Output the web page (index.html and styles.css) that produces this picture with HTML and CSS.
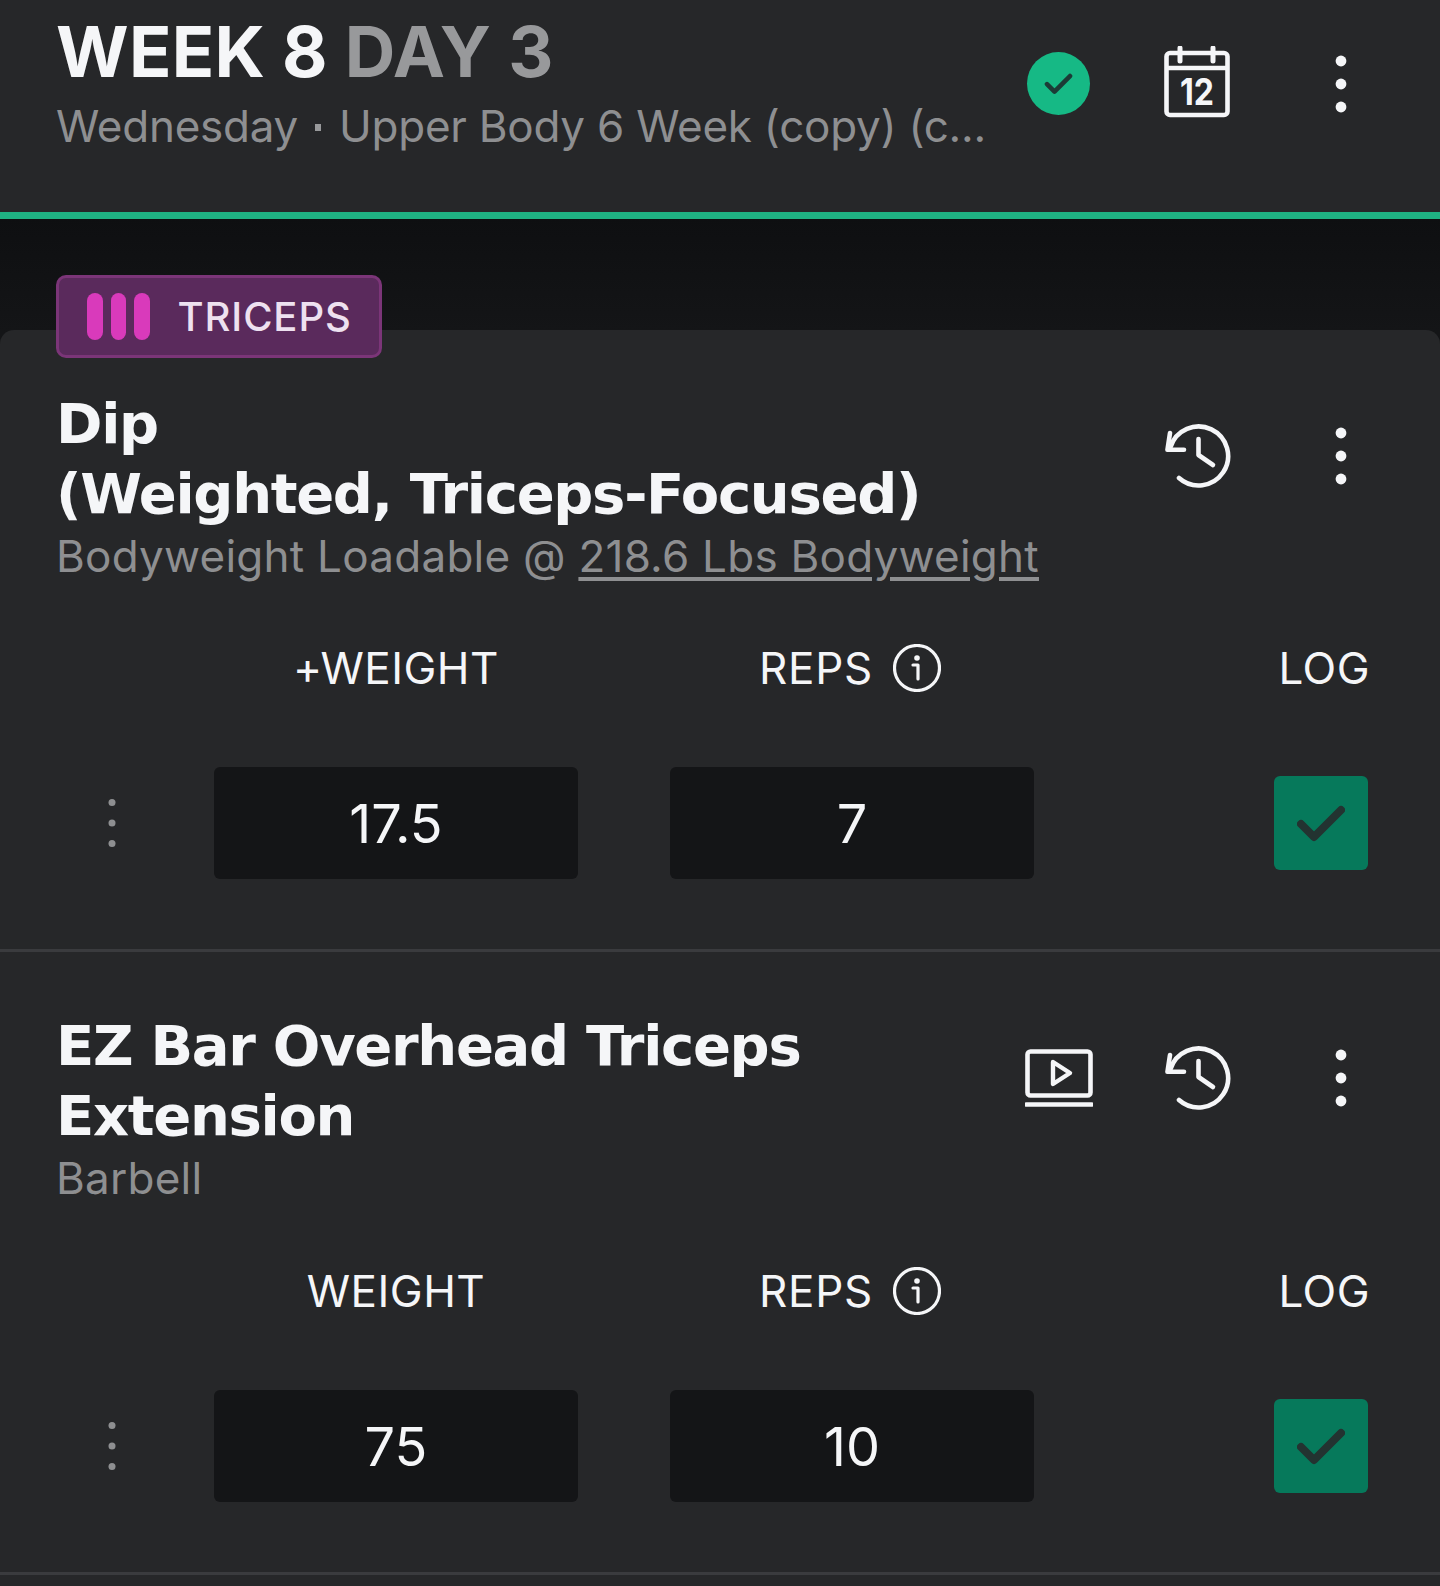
FILE: index.html
```html
<!DOCTYPE html>
<html lang="en">
<head>
    <meta charset="UTF-8">
    <title>Week 8 Day 3</title>
    <link rel="stylesheet" href="styles.css">
</head>
<body>
    <svg class="defs" width="0" height="0">
        <symbol id="i-history" viewBox="0 0 66 66">
            <path d="M5.500 23 A29.500 29.500 0 1 1 14 54" fill="none" stroke="currentColor" stroke-width="4.600" stroke-linecap="round"/>
            <path d="M5 9 L2.500 25.700 L19 25.700" fill="none" stroke="currentColor" stroke-width="4.600" stroke-linecap="round" stroke-linejoin="round"/>
            <path d="M33.500 15 V31 L48 41" fill="none" stroke="currentColor" stroke-width="4.600" stroke-linecap="round" stroke-linejoin="round"/>
        </symbol>
        <symbol id="i-kebab" viewBox="0 0 12 58">
            <circle cx="6" cy="6" r="5.400" fill="currentColor"/>
            <circle cx="6" cy="29" r="5.400" fill="currentColor"/>
            <circle cx="6" cy="52" r="5.400" fill="currentColor"/>
        </symbol>
        <symbol id="i-dots" viewBox="0 0 12 58">
            <circle cx="6" cy="8.500" r="3.500" fill="currentColor"/>
            <circle cx="6" cy="29" r="3.500" fill="currentColor"/>
            <circle cx="6" cy="49.500" r="3.500" fill="currentColor"/>
        </symbol>
        <symbol id="i-info" viewBox="0 0 48 48">
            <circle cx="24" cy="24" r="22.500" fill="none" stroke="currentColor" stroke-width="3.200"/>
            <circle cx="24" cy="14" r="2.800" fill="currentColor"/>
            <path d="M20 21 H25 V35" fill="none" stroke="currentColor" stroke-width="3.200" stroke-linecap="round" stroke-linejoin="round"/>
        </symbol>
        <symbol id="i-check" viewBox="0 0 48 40">
            <path d="M4 21 L17 34 L44 7" fill="none" stroke="currentColor" stroke-width="8" stroke-linecap="round" stroke-linejoin="round"/>
        </symbol>
    </svg>

    <header class="top">
        <div class="top-text">
            <h1 class="top-title">WEEK 8 <span class="muted">DAY 3</span></h1>
            <p class="top-sub">Wednesday<span class="dot"></span>Upper Body 6 Week (copy) (c...</p>
        </div>
        <div class="top-done">
            <svg class="done-check"><use href="#i-check"/></svg>
        </div>
        <svg class="calendar" viewBox="0 0 66 72">
            <rect x="2.500" y="7" width="61" height="62" rx="3.500" fill="none" stroke="currentColor" stroke-width="4.600"/>
            <path d="M2.500 22 H63.500" stroke="currentColor" stroke-width="4.600"/>
            <path d="M16 2 V15 M49 2 V15" stroke="currentColor" stroke-width="5" stroke-linecap="round"/>
            <text x="16" y="59" class="calendar-num" textLength="34" lengthAdjust="spacingAndGlyphs">12</text>
        </svg>
        <svg class="kebab kebab-top"><use href="#i-kebab"/></svg>
    </header>

    <main class="group">
        <div class="badge">
            <span class="badge-bars"><i></i><i></i><i></i></span>
            <span>TRICEPS</span>
        </div>

        <div class="card">
            <section class="exercise">
                <div class="ex-head">
                    <div class="ex-text">
                        <h2 class="ex-name">Dip<br>(Weighted, Triceps-Focused)</h2>
                        <p class="ex-type">Bodyweight Loadable @ <u>218.6 Lbs Bodyweight</u></p>
                    </div>
                    <div class="ex-actions">
                        <svg class="history"><use href="#i-history"/></svg>
                        <svg class="kebab"><use href="#i-kebab"/></svg>
                    </div>
                </div>
                <div class="sets">
                    <div></div>
                    <div class="label">+WEIGHT</div>
                    <div class="label label-reps">REPS <svg class="info"><use href="#i-info"/></svg></div>
                    <div class="label label-log">LOG</div>

                    <svg class="handle"><use href="#i-dots"/></svg>
                    <div class="value">17.5</div>
                    <div class="value">7</div>
                    <div class="log"><svg class="log-check"><use href="#i-check"/></svg></div>
                </div>
            </section>

            <section class="exercise">
                <div class="ex-head">
                    <div class="ex-text">
                        <h2 class="ex-name">EZ Bar Overhead Triceps<br>Extension</h2>
                        <p class="ex-type">Barbell</p>
                    </div>
                    <div class="ex-actions">
                        <svg class="video" viewBox="0 0 68 58">
                            <rect x="2.500" y="2.500" width="63" height="44" rx="3" fill="none" stroke="currentColor" stroke-width="4.600"/>
                            <path d="M1.500 55.500 H66.500" stroke="currentColor" stroke-width="4.600" stroke-linecap="round"/>
                            <path d="M28 13 L45 24 L28 35 Z" fill="none" stroke="currentColor" stroke-width="4.400" stroke-linejoin="round"/>
                        </svg>
                        <svg class="history"><use href="#i-history"/></svg>
                        <svg class="kebab"><use href="#i-kebab"/></svg>
                    </div>
                </div>
                <div class="sets">
                    <div></div>
                    <div class="label">WEIGHT</div>
                    <div class="label label-reps">REPS <svg class="info"><use href="#i-info"/></svg></div>
                    <div class="label label-log">LOG</div>

                    <svg class="handle"><use href="#i-dots"/></svg>
                    <div class="value">75</div>
                    <div class="value">10</div>
                    <div class="log"><svg class="log-check"><use href="#i-check"/></svg></div>
                </div>
            </section>
        </div>
    </main>
</body>
</html>
```

FILE: styles.css
```css
html, body {
    height: 100%;
}
body {
    margin: 0;
    height: 1586px;
    overflow: hidden;
    background-color: #101113;
    color: #f5f6f8;
    font-family: Inter, "Liberation Sans", sans-serif;
}
.defs {
    position: absolute;
}
.muted {
    color: #98999b;
}

/* top bar */
.top {
    display: flex;
    align-items: flex-start;
    height: 212px;
    padding-left: 56px;
    background-color: #262729;
    border-bottom: 7px solid #1fb283;
}
.top-text {
    width: 971px;
}
.top-title {
    margin: 10px 0 0;
    font-size: 70px;
    line-height: 84px;
    font-weight: 700;
    letter-spacing: 0.300px;
}
.top-sub {
    margin: 5px 0 0;
    font-size: 44px;
    line-height: 54px;
    letter-spacing: -0.250px;
    color: #8e8f91;
    white-space: nowrap;
}
.dot {
    display: inline-block;
    width: 6px;
    height: 7px;
    margin: 0 18px 0 17px;
    vertical-align: 11px;
    background-color: #98999b;
}
.top-done {
    display: flex;
    align-items: center;
    justify-content: center;
    width: 63px;
    height: 63px;
    margin-top: 52px;
    border-radius: 50%;
    background-color: #16b985;
}
.done-check {
    width: 29px;
    height: 23px;
    color: #1c3b36;
}
.calendar {
    width: 66px;
    height: 72px;
    margin: 46px 0 0 74px;
    color: #f5f6f8;
}
.calendar-num {
    font-size: 37px;
    font-weight: 700;
    fill: currentColor;
}
.kebab {
    width: 12px;
    height: 58px;
    color: #f5f6f8;
}
.kebab-top {
    margin: 55px 0 0 105px;
}

/* group */
.group {
    padding-top: 56px;
    background: linear-gradient(#0e0f11, #141517 112px);
}
.badge {
    position: relative;
    z-index: 1;
    display: flex;
    align-items: center;
    gap: 28px;
    box-sizing: border-box;
    width: 326px;
    height: 83px;
    margin: 0 0 -28px 56px;
    padding-left: 28px;
    background-color: #5a2a5c;
    border: 3px solid #7b3578;
    border-radius: 10px;
    color: #eee1f0;
    font-size: 40px;
    font-weight: 500;
    letter-spacing: 0.900px;
}
.badge-bars {
    display: flex;
    gap: 8px;
}
.badge-bars i {
    display: block;
    width: 15.500px;
    height: 47px;
    border-radius: 8px;
    background-color: #d93abb;
}
.card {
    min-height: 1260px;
    border-radius: 14px 14px 0 0;
    background-color: #262729;
}

/* exercise */
.exercise {
    padding: 0 71px 70px 56px;
    border-bottom: 3px solid #3a3b3e;
}
.ex-head {
    display: flex;
    justify-content: space-between;
    padding-top: 59px;
}
.ex-name {
    margin: 0;
    font-family: "DejaVu Sans", sans-serif;
    font-size: 56px;
    line-height: 70px;
    font-weight: 700;
    letter-spacing: -1.300px;
}
.ex-type {
    margin: -2px 0 0;
    font-size: 44px;
    line-height: 58px;
    letter-spacing: 0.250px;
    color: #8e8f91;
}
.ex-type u {
    text-underline-offset: 5px;
}
.ex-actions {
    display: flex;
    align-items: flex-start;
    margin-right: 22px;
    padding-top: 35px;
}
.video {
    width: 68px;
    height: 58px;
    margin-top: 3px;
    margin-right: 72px;
    color: #f5f6f8;
}
.history {
    width: 66px;
    height: 66px;
    color: #f5f6f8;
}
.ex-actions .kebab {
    margin: 3px 0 0 104px;
}

/* sets */
.sets {
    display: grid;
    grid-template-columns: 66px 364px 364px 1fr;
    column-gap: 92px;
    row-gap: 72px;
    margin-top: 56px;
    align-items: center;
}
.exercise + .exercise .sets {
    margin-top: 57px;
}
.label {
    display: flex;
    align-items: center;
    justify-content: center;
    gap: 20px;
    height: 54px;
    font-size: 44px;
    letter-spacing: 0.500px;
}
.label-reps {
    padding-right: 4px;
    letter-spacing: 0.700px;
}
.label-log {
    justify-content: flex-end;
    margin-right: -1px;
}
.info {
    width: 48px;
    height: 48px;
    color: #f5f6f8;
}
.handle {
    width: 12px;
    height: 58px;
    margin-left: 50px;
    color: #8e8f91;
}
.value {
    display: flex;
    align-items: center;
    justify-content: center;
    height: 112px;
    border-radius: 6px;
    background-color: #141517;
    font-size: 54px;
    letter-spacing: 0;
}
.log {
    display: flex;
    align-items: center;
    justify-content: center;
    width: 94px;
    height: 94px;
    margin-left: auto;
    margin-right: 1px;
    border-radius: 6px;
    background-color: #06795b;
}
.log-check {
    width: 48px;
    height: 40px;
    color: #233331;
}
```
